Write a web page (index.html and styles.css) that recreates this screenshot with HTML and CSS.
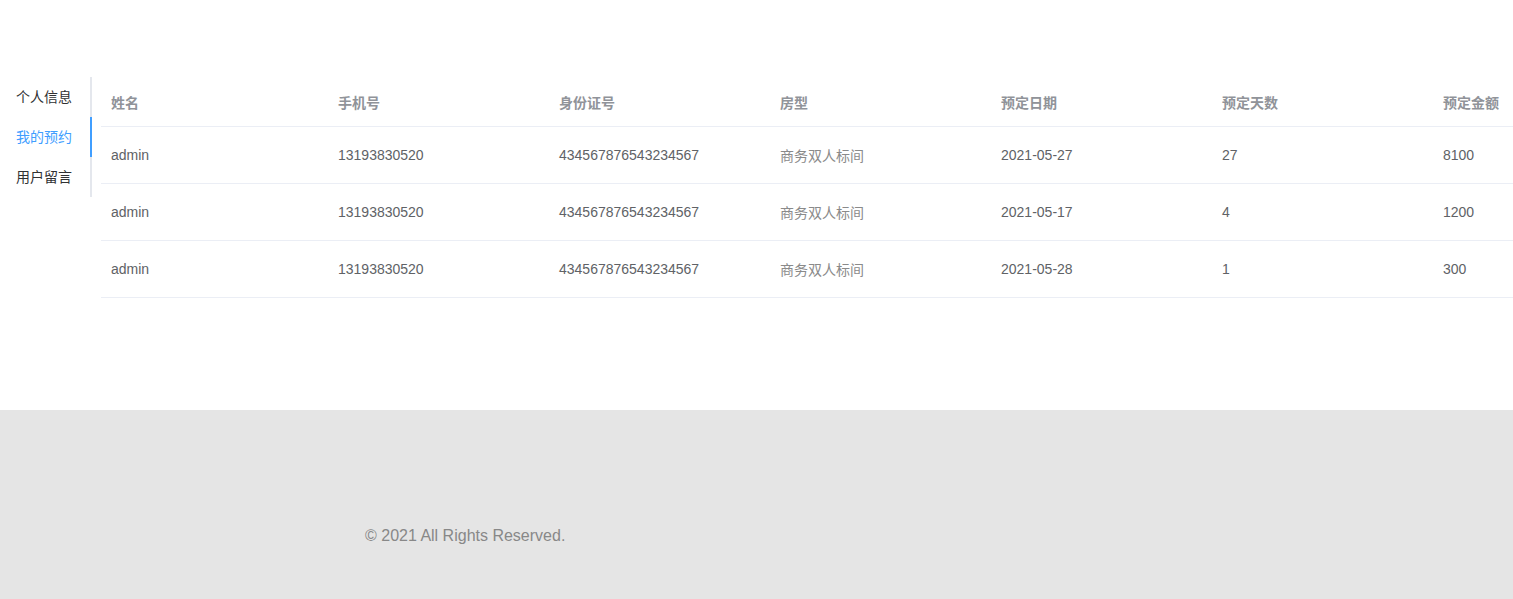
FILE: index.html
```html
<!DOCTYPE html>
<html lang="zh">
<head>
<meta charset="utf-8">
<title>我的预约</title>
<link rel="stylesheet" href="styles.css">
</head>
<body>
<div class="main">
  <div class="tabs">
    <div class="tabs-nav">
      <div class="tab-item">个人信息</div>
      <div class="tab-item active">我的预约</div>
      <div class="tab-item">用户留言</div>
      <div class="active-bar"></div>
    </div>
    <div class="tabs-content">
      <table class="table">
        <colgroup>
          <col class="c-first">
          <col class="c"><col class="c"><col class="c"><col class="c"><col class="c"><col class="c">
        </colgroup>
        <thead>
          <tr><th>姓名</th><th>手机号</th><th>身份证号</th><th>房型</th><th>预定日期</th><th>预定天数</th><th>预定金额</th></tr>
        </thead>
        <tbody>
          <tr><td>admin</td><td>13193830520</td><td>434567876543234567</td><td class="room">商务双人标间</td><td>2021-05-27</td><td>27</td><td>8100</td></tr>
          <tr><td>admin</td><td>13193830520</td><td>434567876543234567</td><td class="room">商务双人标间</td><td>2021-05-17</td><td>4</td><td>1200</td></tr>
          <tr><td>admin</td><td>13193830520</td><td>434567876543234567</td><td class="room">商务双人标间</td><td>2021-05-28</td><td>1</td><td>300</td></tr>
        </tbody>
      </table>
    </div>
  </div>
</div>
<footer class="footer">
  <p class="copy">© 2021 All Rights Reserved.</p>
</footer>
</body>
</html>
```

FILE: styles.css
```css
html, body {
  margin: 0;
  padding: 0;
  background: #fff;
  font-family: "Liberation Sans", Arial, "Noto Sans CJK SC", sans-serif;
  overflow-x: hidden;
}

.main {
  box-sizing: border-box;
  height: 410px;
  padding-top: 77px;
}

.tabs {
  display: flex;
  align-items: flex-start;
}

.tabs-nav {
  position: relative;
  width: 90px;
  border-right: 2px solid #e4e7ed;
  flex: none;
}

.tab-item {
  box-sizing: border-box;
  height: 40px;
  line-height: 40px;
  padding: 0 18px 0 16px;
  font-size: 14px;
  color: #303133;
  white-space: nowrap;
}

.tab-item.active {
  color: #409eff;
}

.active-bar {
  position: absolute;
  right: -2px;
  top: 40px;
  width: 2px;
  height: 40px;
  background: #409eff;
}

.tabs-content {
  flex: 1;
  min-width: 0;
  margin-left: 9px;
  overflow: hidden;
}

.table {
  border-collapse: collapse;
  table-layout: fixed;
  width: 1553px;
  font-size: 14px;
}

.c-first { width: 227px; }
.c { width: 221px; }

.table th,
.table td {
  text-align: left;
  padding: 0 10px;
  border-bottom: 1px solid #ebeef5;
  white-space: nowrap;
}

.table th {
  height: 49px;
  color: #909399;
  font-weight: bold;
}

.table td {
  height: 56px;
  color: #606266;
}

.table td.room {
  color: #8a8a8a;
}

.footer {
  background: #e5e5e5;
  height: 200px;
  padding-top: 1px;
  box-sizing: border-box;
}

.copy {
  margin: 115px 0 0 365px;
  font-size: 16px;
  line-height: 20px;
  color: #888;
}
```
